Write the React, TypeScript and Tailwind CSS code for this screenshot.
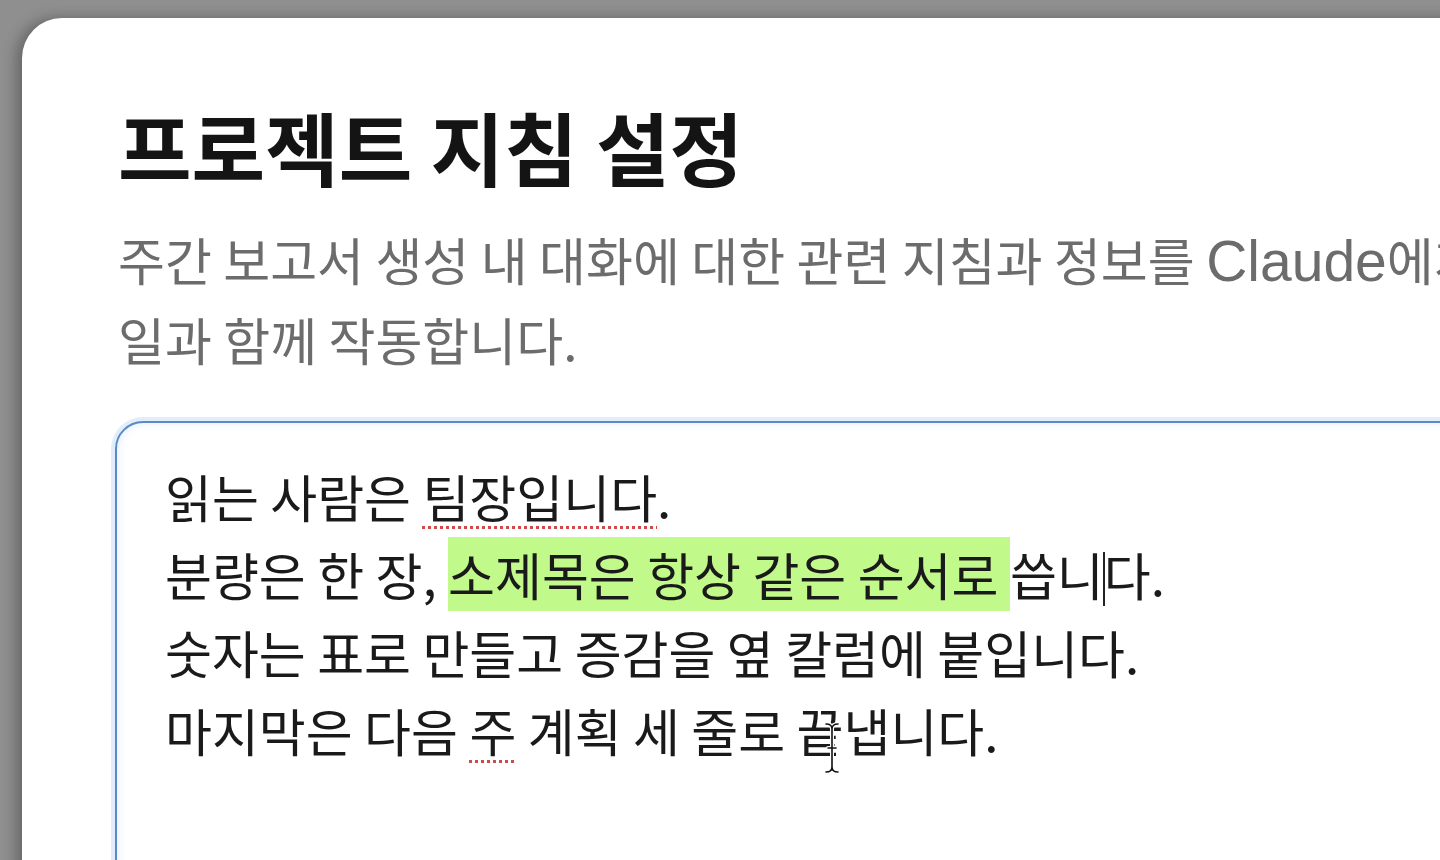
const KR = { fontFamily: '"Noto Sans CJK KR", "Noto Sans", sans-serif' }

function Squiggle({ children }: { children: React.ReactNode }) {
  return (
    <span className="underline decoration-dotted decoration-[#cf4b4b] decoration-[3px] underline-offset-[8px]">
      {children}
    </span>
  )
}

function IBeam() {
  return (
    <svg width="20" height="54" viewBox="0 0 20 54" className="absolute left-[705px] top-[298px]">
      <path
        d="M4 3 Q10 3 10 8 Q10 3 16 3 M10 8 V46 Q10 51 4 51 M10 46 Q10 51 16 51 M6 27 H14"
        fill="none"
        stroke="#fff"
        strokeWidth="4"
        strokeLinecap="round"
      />
      <path
        d="M4 3 Q10 3 10 8 Q10 3 16 3 M10 8 V46 Q10 51 4 51 M10 46 Q10 51 16 51 M6 27 H14"
        fill="none"
        stroke="#111"
        strokeWidth="1.6"
        strokeLinecap="round"
      />
    </svg>
  )
}

export default function App() {
  return (
    <div className="h-[860px] w-[1440px] overflow-hidden bg-[#8f8f8f] pl-[22px] pt-[18px]" style={KR}>
      <div className="h-[1000px] w-[1600px] rounded-tl-[40px] bg-white pl-[96px] pt-[82px] shadow-[-6px_0_14px_rgba(0,0,0,0.28)]">
        <h1 className="text-[80px] font-bold leading-[90px] text-[#141414]">프로젝트 지침 설정</h1>

        <p className="mt-[30px] whitespace-nowrap text-[51px] leading-[78px] text-[#6c6c6c]">
          주간 보고서 생성 내 대화에 대한 관련 지침과 정보를{' '}
          <span className="text-[57px]" style={{ fontFamily: '"Liberation Sans", sans-serif' }}>
            Claude
          </span>
          에게 제공하세요. 이 지침은 프로젝트 파
          <br />
          일과 함께 작동합니다.
        </p>

        {/* 지침 입력 영역 */}
        <div className="relative -ml-[3px] mt-[43px] h-[600px] w-[1420px] rounded-[28px] border-2 border-[#5b89c6] bg-white pl-[48px] pt-[34px] text-[51px] leading-[78px] text-[#1a1a1a] shadow-[0_0_0_4px_rgba(150,190,240,0.28),inset_0_0_10px_rgba(160,200,245,0.35)]">
          <div>
            읽는 사람은 <Squiggle>팀장입니다</Squiggle>.
          </div>
          <div>
            분량은 한 장, <span className="bg-[#c2f98b]">소제목은 항상 같은 순서로 </span>씁니
            <span className="mx-[-1px] inline-block h-[54px] w-[2px] bg-[#222] align-[-10px]" />
            다.
          </div>
          <div>숫자는 표로 만들고 증감을 옆 칼럼에 붙입니다.</div>
          <div>
            마지막은 다음 <Squiggle>주</Squiggle> 계획 세 줄로 끝냅니다.
          </div>
          <IBeam />
        </div>
      </div>
    </div>
  )
}
